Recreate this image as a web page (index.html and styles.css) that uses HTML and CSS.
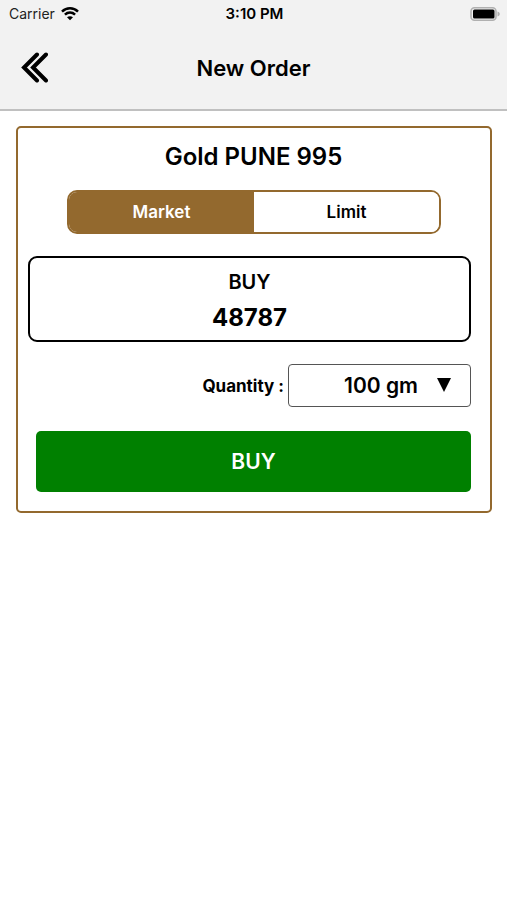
FILE: index.html
```html
<!DOCTYPE html>
<html lang="en">
<head>
<meta charset="utf-8">
<meta name="viewport" content="width=device-width, initial-scale=1">
<title>New Order</title>
<link rel="stylesheet" href="styles.css">
</head>
<body>
<header class="top">
  <div class="status">
    <div class="carrier">
      <span>Carrier</span>
      <svg width="18" height="14" viewBox="0 0 18 14" aria-hidden="true">
        <path d="M1 4.600C5.500 .2 12.500 .2 17 4.600M3.900 7.700c3-2.800 7.200-2.800 10.200 0" fill="none" stroke="#000" stroke-width="2.500"/>
        <path d="M9 13.200 6 10.300c1.700-1.500 4.300-1.500 6 0z"/>
      </svg>
    </div>
    <span class="time">3:10 PM</span>
    <svg class="battery" width="30" height="14" viewBox="0 0 30 14" aria-hidden="true">
      <rect x="1" y=".8" width="25" height="12.400" rx="3.500" fill="none" stroke="#b0b0b0" stroke-width="1.600"/>
      <rect x="3" y="2.500" width="21.500" height="9" rx="1.500"/>
      <path d="M27.500 4.500c3 1 3 4 0 5z" fill="#b0b0b0"/>
    </svg>
  </div>
  <nav class="nav">
    <button class="back" type="button" aria-label="Back">
      <svg width="28" height="32" viewBox="0 0 28 32" aria-hidden="true">
        <path d="M17 2.500 4 15.500l13 13M26 2.500 13 15.500l13 13" fill="none" stroke="#000" stroke-width="4" stroke-linecap="round"/>
      </svg>
    </button>
    <h1 class="title">New Order</h1>
  </nav>
</header>
<main class="card">
  <h2 class="product">Gold PUNE 995</h2>
  <div class="tabs">
    <button class="tab active" type="button">Market</button>
    <button class="tab" type="button">Limit</button>
  </div>
  <section class="quote">
    <span class="side">BUY</span>
    <span class="price">48787</span>
  </section>
  <div class="quantity">
    <label for="quantity">Quantity :</label>
    <div class="picker">
      <select id="quantity"><option>100 gm</option></select>
      <svg class="arrow" width="16" height="14" viewBox="0 0 16 14" aria-hidden="true"><path d="M1 0h14L8 14z"/></svg>
    </div>
  </div>
  <button class="buy" type="button">BUY</button>
</main>
</body>
</html>
```
FILE: styles.css
```css
* { box-sizing: border-box; }
body { margin: 0; background: #fff; color: #000; font-family: Inter, "Liberation Sans", sans-serif; }
button, select { font: inherit; color: inherit; cursor: pointer; }
svg { display: block; }
h1, h2 { margin: 0; }
.top { background: #f2f2f2; border-bottom: 2px solid #c0c0c0; }
.status { display: grid; grid-template-columns: 1fr auto 1fr; align-items: center; height: 27px; padding: 0 7px 0 9px; font-size: 14px; }
.carrier { display: flex; align-items: center; gap: 6px; color: #222; }
.time { font-size: 15px; font-weight: 600; }
.battery { justify-self: end; }
.nav { display: grid; grid-template-columns: 1fr auto 1fr; align-items: center; height: 82px; padding: 0 20px; }
.back { justify-self: start; border: 0; padding: 0; background: none; }
.title { font-size: 22px; line-height: 28px; font-weight: 600; }
.card { margin: 15px 15px 0 16px; padding: 13px 19px 19px 18px; border: 2px solid #93692e; border-radius: 5px; }
.product { font-size: 24px; line-height: 32px; font-weight: 600; text-align: center; }
.tabs { display: flex; height: 44px; margin: 17px 30px 0 31px; border: 2px solid #93692e; border-radius: 10px; overflow: hidden; }
.tab { flex: 1; padding: 0; border: 0; background: #fff; font-size: 17px; font-weight: 600; }
.tab.active { background: #93692e; color: #fff; }
.quote { display: flex; flex-direction: column; align-items: center; gap: 4px; margin: 22px 0 0 -8px; padding: 8px 0 6px; border: 2px solid #000; border-radius: 9px; font-weight: 600; line-height: 32px; }
.side { font-size: 20px; }
.price { font-size: 24px; font-weight: 700; }
.quantity { display: flex; justify-content: flex-end; align-items: center; gap: 4px; margin-top: 22px; font-size: 17px; font-weight: 700; }
.picker { position: relative; width: 183px; }
.picker select { display: block; width: 100%; height: 43px; padding: 0 52px 0 0; border: 1px solid #555; border-radius: 4px; appearance: none; background: #fff; font-size: 21px; font-weight: 600; text-align: right; text-align-last: right; }
.arrow { position: absolute; right: 19px; top: 14px; pointer-events: none; }
.buy { display: block; width: 100%; height: 61px; margin-top: 24px; border: 0; border-radius: 5px; background: #008000; color: #fff; font-size: 21px; font-weight: 600; }
```
